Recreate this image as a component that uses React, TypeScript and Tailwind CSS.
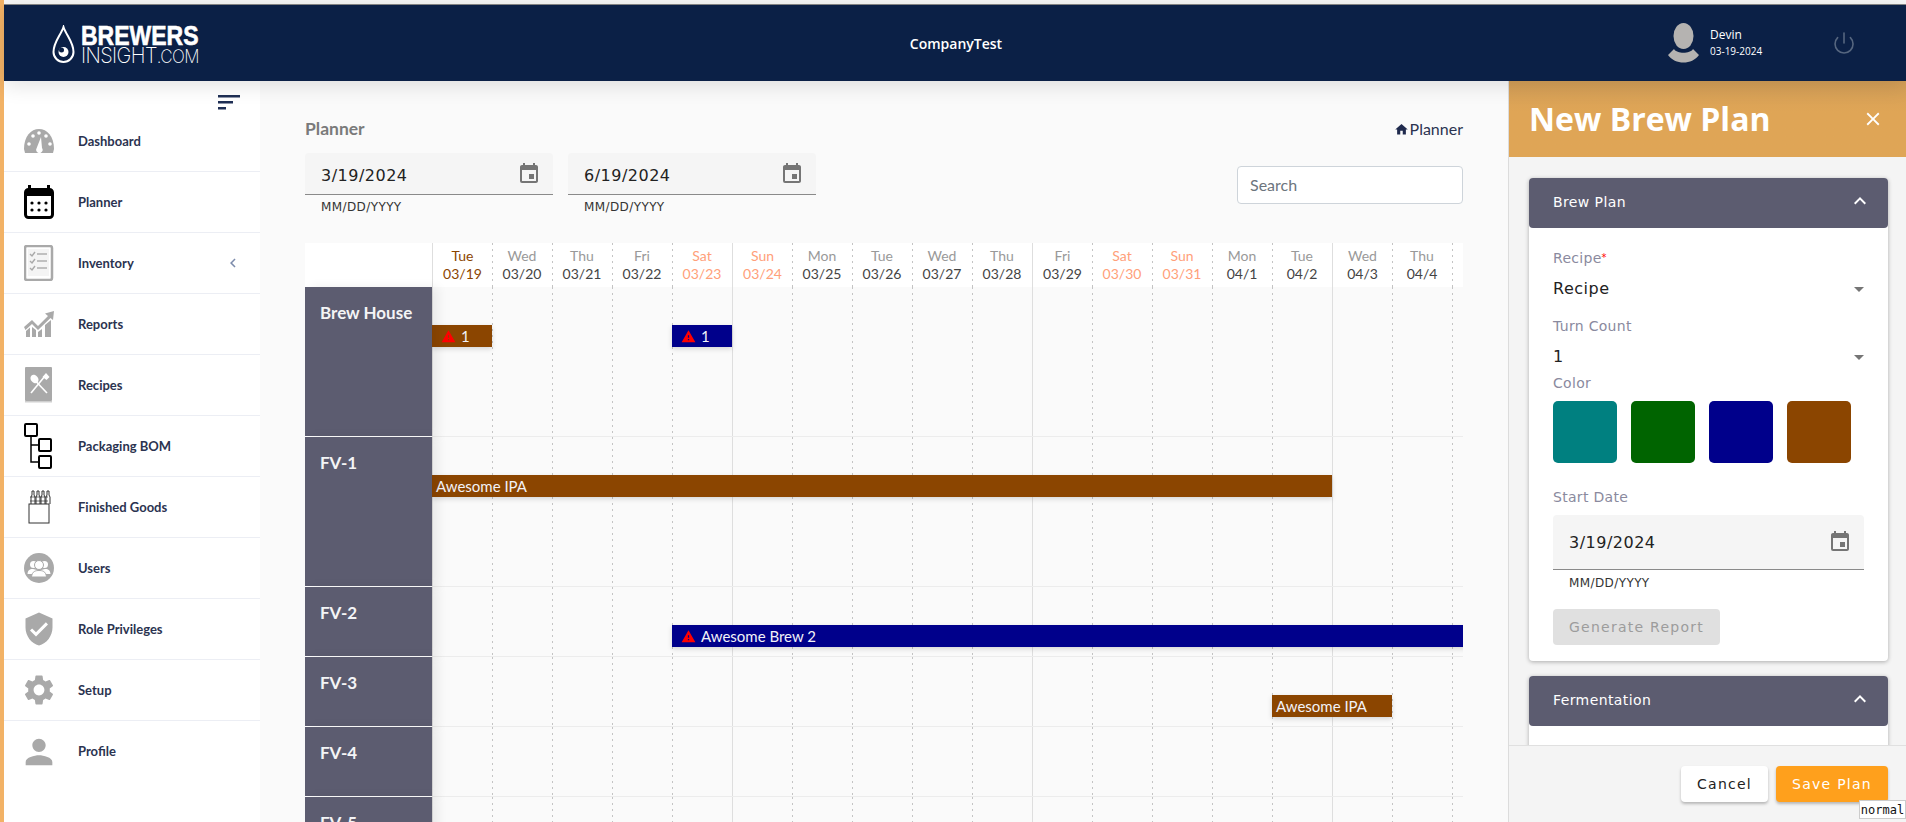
import React from 'react';
import { MdEvent, MdArrowDropDown, MdExpandLess, MdClose, MdWarning, MdHome, MdVerifiedUser, MdPerson, MdSettings, MdChevronLeft } from 'react-icons/md';
import { Power } from 'lucide-react';

const GaugeIcon = () => (
  <svg width="30" height="24" viewBox="0 0 30 24">
    <path d="M0 20 C0 7 7 0 15 0 C23 0 30 7 30 20 L29 24 H1 L0 20 Z" fill="#a9a9a9" />
    <circle cx="5" cy="15" r="1.8" fill="#fff" />
    <circle cx="9" cy="7" r="1.8" fill="#fff" />
    <circle cx="15" cy="4" r="1.8" fill="#fff" />
    <circle cx="22" cy="7" r="1.8" fill="#fff" />
    <circle cx="26" cy="15" r="1.8" fill="#fff" />
    <path d="M17 8 L18 19 A3.2 3.2 0 1 1 12.5 19.5 Z" fill="#fff" />
  </svg>
);

const CalendarIcon = () => (
  <svg width="30" height="34" viewBox="0 0 30 34">
    <rect x="1.5" y="4.5" width="27" height="28" rx="3" fill="#fff" stroke="#000" strokeWidth="3" />
    <rect x="1" y="6" width="28" height="5" fill="#000" />
    <rect x="4" y="0" width="3" height="6" fill="#000" />
    <rect x="23" y="0" width="3" height="6" fill="#000" />
    {[8, 15, 22].map((x) => (
      <g key={x}>
        <circle cx={x} cy="18" r="1.6" fill="#000" />
        <circle cx={x} cy="25" r="1.6" fill="#000" />
      </g>
    ))}
  </svg>
);

const ChecklistIcon = () => (
  <svg width="30" height="36" viewBox="0 0 30 36" fill="none">
    <rect x="1" y="1" width="27" height="34" rx="2" fill="#fff" stroke="#a9a9a9" strokeWidth="2.5" />
    <rect x="4" y="4" width="21" height="27" fill="#f4f4f4" />
    {[9, 16, 23].map((y) => (
      <g key={y} stroke="#a9a9a9" strokeWidth="1.4">
        <path d={`M6 ${y} l2 2 l3 -4`} />
        <path d={`M13 ${y} h10`} />
      </g>
    ))}
  </svg>
);

const ReportsIcon = () => (
  <svg width="30" height="26" viewBox="0 0 30 26" fill="#a9a9a9">
    <path d="M0 16 L8 9 L14 15 L24 5 L21 2.5 L30 0 L29 9 L26.5 7 L14 19 L8 13 L1.5 19 Z" />
    <path d="M2 20 L6 16.5 V26 H2 Z M8 16 L12 19 V26 H8 Z M14 21 L18 18 V26 H14 Z M21 14 L27 9 V26 H21 Z" />
  </svg>
);

const RecipesIcon = () => (
  <svg width="28" height="36" viewBox="0 0 28 36">
    <rect width="27" height="34" rx="1" fill="#a9a9a9" />
    <rect y="34" width="27" height="1.5" fill="#cfcfcf" />
    <ellipse cx="9.5" cy="12" rx="3.6" ry="4.6" transform="rotate(-40 9.5 12)" fill="#fff" />
    <path d="M11.5 15 L22 26" stroke="#fff" strokeWidth="1.6" />
    <path d="M20 9 L6 26" stroke="#fff" strokeWidth="1.6" />
    <path d="M17.5 10 L21 6 L24.5 10 L21.5 13 Z" fill="#fff" />
  </svg>
);

const BomIcon = () => (
  <svg width="30" height="46" viewBox="0 0 30 46" fill="none" stroke="#000" strokeWidth="1.5">
    <rect x="1" y="1" width="12" height="12" rx="1" strokeWidth="2" />
    <rect x="15" y="16" width="12" height="12" rx="1" strokeWidth="2" />
    <rect x="15" y="33" width="12" height="12" rx="1" strokeWidth="2" />
    <path d="M7 13 V39 H15 M7 22 H15" />
  </svg>
);

const GoodsIcon = () => (
  <svg width="24" height="36" viewBox="0 0 24 36" fill="none" stroke="#333" strokeWidth="1">
    <rect x="2" y="15" width="20" height="19" fill="#fff" />
    {[4, 9, 14, 19].map((x) => (
      <path key={x} d={`M${x} 15 V8 l1 -2 V2 h2 V6 l1 2 V15`} />
    ))}
    <path d="M3 8 H21 M3 12 H21" strokeWidth="0.7" />
  </svg>
);

const UsersIcon = () => (
  <svg width="30" height="30" viewBox="0 0 30 30">
    <circle cx="15" cy="15" r="15" fill="#a9a9a9" />
    <circle cx="9.5" cy="11.5" r="3.5" fill="#fff" />
    <circle cx="20.5" cy="11.5" r="3.5" fill="#fff" />
    <path d="M3.5 21 C4 16 7 16 9 16 L13 17 V21 Z M26.5 21 C26 16 23 16 21 16 L17 17 V21 Z" fill="#fff" />
    <circle cx="15" cy="12" r="4.5" fill="#fff" stroke="#a9a9a9" />
    <path d="M7.5 24 C8 18 12 17.5 15 17.5 C18 17.5 22 18 22.5 24 Z" fill="#fff" stroke="#a9a9a9" />
  </svg>
);

const AvatarIcon = () => (
  <svg width="31" height="40" viewBox="0 0 31 40">
    <ellipse cx="15.5" cy="13" rx="10" ry="13" fill="#b5b3b1" />
    <path d="M6 26 C9 31 22 31 25 26 L31 32 C24 42 7 42 0 32 Z" fill="#b5b3b1" />
  </svg>
);

const Logo = () => (
  <div className="flex items-center gap-[6px] text-white w-[148px] shrink-0">
    <svg width="23" height="39" viewBox="0 0 23 39" fill="none" stroke="#fff" strokeWidth="2" className="shrink-0 mt-[2px]">
      <path d="M11.5 2 C9 10 1.5 17 1.5 27 A10 10 0 0 0 21.5 27 C21.5 17 14 10 11.5 2 Z" />
      <circle cx="11.5" cy="27" r="5" fill="#fff" stroke="none" />
      <circle cx="9.5" cy="25" r="2.5" fill="#0b2046" stroke="none" />
    </svg>
    <div className="flex flex-col gap-[3px] whitespace-nowrap">
      <span className="text-[23px] leading-[20px] font-bold font-['Liberation_Sans',sans-serif] scale-y-[1.2] origin-top [-webkit-text-stroke:0.5px_white]">BREWERS</span>
      <span className="text-[20px] leading-[17px] font-extralight font-['Inter',sans-serif] tracking-[-0.6px] scale-y-[1.1] origin-top">
        INSIGHT<span className="text-[17px]">.COM</span>
      </span>
    </div>
  </div>
);

const menu = [
  { label: 'Dashboard', icon: <GaugeIcon /> },
  { label: 'Planner', icon: <CalendarIcon /> },
  { label: 'Inventory', icon: <ChecklistIcon />, caret: true },
  { label: 'Reports', icon: <ReportsIcon /> },
  { label: 'Recipes', icon: <RecipesIcon /> },
  { label: 'Packaging BOM', icon: <BomIcon /> },
  { label: 'Finished Goods', icon: <GoodsIcon /> },
  { label: 'Users', icon: <UsersIcon /> },
  { label: 'Role Privileges', icon: <MdVerifiedUser size={36} color="#a9a9a9" className="-mx-[3px]" /> },
  { label: 'Setup', icon: <MdSettings size={36} color="#a9a9a9" className="-mx-[3px]" /> },
  { label: 'Profile', icon: <MdPerson size={40} color="#a9a9a9" className="-mx-[5px]" /> },
];

const days = [
  ['Tue', '03/19'], ['Wed', '03/20'], ['Thu', '03/21'], ['Fri', '03/22'], ['Sat', '03/23'], ['Sun', '03/24'],
  ['Mon', '03/25'], ['Tue', '03/26'], ['Wed', '03/27'], ['Thu', '03/28'], ['Fri', '03/29'], ['Sat', '03/30'],
  ['Sun', '03/31'], ['Mon', '04/1'], ['Tue', '04/2'], ['Wed', '04/3'], ['Thu', '04/4'], ['Fri', '04/5'],
];

const rows = [
  { name: 'Brew House', tall: true, bars: [
    { start: 0, span: 1, color: 'bg-[#8b4500]', text: '1', warn: true },
    { start: 4, span: 1, color: 'bg-[#00008b]', text: '1', warn: true },
  ] },
  { name: 'FV-1', tall: true, bars: [{ start: 0, span: 15, color: 'bg-[#8b4500]', text: 'Awesome IPA' }] },
  { name: 'FV-2', bars: [{ start: 4, span: 14, color: 'bg-[#00008b]', text: 'Awesome Brew 2', warn: true }] },
  { name: 'FV-3', bars: [{ start: 14, span: 2, color: 'bg-[#8b4500]', text: 'Awesome IPA' }] },
  { name: 'FV-4', bars: [] },
  { name: 'FV-5', bars: [] },
];

// every fifth column has a solid line, the others a sparse dotted one
const dayLine = (i: number) =>
  i % 5 === 0
    ? 'border-l border-[#dedede]'
    : 'bg-[linear-gradient(to_bottom,#c4c4c4_2px,transparent_2px)] bg-[length:1px_6px] bg-repeat-y';

const DateField = ({ value, width }: { value: string; width: string }) => (
  <div className={width}>
    <div className="h-[42px] bg-[#f5f5f5] rounded-t-[4px] border-b border-[#8a8a8a] flex items-center justify-between pl-[16px] pr-[12px] text-[16px] tracking-[0.5px] text-[#222]">
      <span className="mt-[4px]">{value}</span>
      <MdEvent size={24} color="#757575" />
    </div>
    <div className="mt-[4px] pl-[16px] text-[12px] leading-[16px] tracking-[0.4px] text-[#333]">MM/DD/YYYY</div>
  </div>
);

const AccordionHead = ({ title }: { title: string }) => (
  <div className="h-[50px] bg-[#5c5c70] rounded-[4px] flex items-center justify-between pl-[24px] pr-[16px] text-white text-[14px] tracking-[0.4px]">
    <span className="-mt-[1px]">{title}</span>
    <MdExpandLess size={24} className="-mt-[4px]" />
  </div>
);

const swatches = ['bg-[#008080]', 'bg-[#006400]', 'bg-[#00008b]', 'bg-[#8b4500]'];

export default function App() {
  return (
    <div className="h-[822px] w-full overflow-hidden flex bg-[#fafafa] font-['Lato',sans-serif]">
      <div className="w-[4px] shrink-0 bg-[#f2b266]" />
      <div className="flex-1 min-w-0 flex flex-col">
        <div className="h-[5px] shrink-0 bg-[#f7f7f7] border-b border-[#888]" />
        <header className="h-[76px] shrink-0 bg-[#0b2046] flex items-center relative z-10 shadow-[0_4px_20px_rgba(0,0,0,0.12)] pl-[48px] pr-[50px]">
          <Logo />
          <div className="flex-1 text-center text-white text-[14px] font-semibold font-['Open_Sans',sans-serif] pl-[44px]">CompanyTest</div>
          <div className="flex items-center gap-[11px] text-white font-['Open_Sans',sans-serif]">
            <AvatarIcon />
            <div className="w-[80px]">
              <div className="text-[12px] leading-[16px]">Devin</div>
              <div className="text-[10px] leading-[16px]">03-19-2024</div>
            </div>
          </div>
          <Power size={24} strokeWidth={1.6} color="#56667f" className="ml-[42px]" />
        </header>

        <div className="flex-1 min-h-0 flex">
          <aside className="w-[256px] shrink-0 bg-white">
            <div className="h-[30px] flex justify-end pr-[20px] pt-[14px]">
              <svg width="22" height="15" viewBox="0 0 22 15" fill="#1f2f55">
                <rect width="22" height="2.5" />
                <rect y="6" width="15" height="2.5" />
                <rect y="12" width="8" height="2.5" />
              </svg>
            </div>
            {menu.map((item, i) => (
              <div key={item.label} className={`h-[61px] flex items-center pl-[20px] pr-[18px] ${i < menu.length - 1 ? 'border-b border-[#eceef4]' : ''}`}>
                <div className="w-[30px] shrink-0 flex justify-center">{item.icon}</div>
                <span className="ml-[24px] mt-[1px] flex-1 text-[13px] font-bold text-[#2b3350]">{item.label}</span>
                {item.caret && <MdChevronLeft size={18} color="#7c8bab" />}
              </div>
            ))}
          </aside>

          <main className="flex-1 min-w-0 overflow-hidden px-[45px] pt-[38px]">
            <div className="flex items-center justify-between h-[20px]">
              <span className="text-[17.5px] font-bold text-[#7a7a7a]">Planner</span>
              <span className="flex items-center gap-[1px] text-[16px] text-[#2b3350]">
                <MdHome size={15} color="#1f2a4d" />
                Planner
              </span>
            </div>
            <div className="mt-[14px] h-[90px] flex justify-between font-['DejaVu_Sans',sans-serif]">
              <div className="flex gap-[15px]">
                <DateField value="3/19/2024" width="w-[248px]" />
                <DateField value="6/19/2024" width="w-[248px]" />
              </div>
              <div className="mt-[13px] w-[226px] h-[38px] bg-white border border-[#ced4da] rounded-[4px] flex items-center px-[12px] text-[16px] text-[#6c757d] font-['Lato',sans-serif]">
                Search
              </div>
            </div>

            <div>
              <div className="flex h-[44px]">
                <div className="w-[127px] shrink-0 bg-white" />
                <div className="flex-1 min-w-0 flex overflow-hidden bg-white">
                  {days.map(([d, date], i) => {
                    const weekend = d === 'Sat' || d === 'Sun';
                    const labelColor = i === 0 ? 'text-[#8b4500]' : weekend ? 'text-[#ffa07a]' : 'text-[#999]';
                    const dateColor = i === 0 ? 'text-[#8b4500]' : weekend ? 'text-[#ffa07a]' : 'text-[#444]';
                    return (
                      <div key={date} className={`w-[60px] shrink-0 text-center text-[14px] leading-[18px] pt-[4px] ${dayLine(i)}`}>
                        {i < days.length - 1 && (
                          <>
                            <div className={labelColor}>{d}</div>
                            <div className={dateColor}>{date}</div>
                          </>
                        )}
                      </div>
                    );
                  })}
                </div>
              </div>

              {rows.map((row) => (
                <div key={row.name} className={`flex ${row.tall ? 'h-[150px]' : 'h-[70px]'}`}>
                  <div className="w-[127px] shrink-0 bg-[#5c5c70] border-b border-white pl-[15px] pt-[16px] text-[17px] leading-[20px] font-bold text-[#f4f4f6] relative z-[1] shadow-[6px_0_10px_rgba(0,0,0,0.07)]">
                    {row.name}
                  </div>
                  <div className="flex-1 min-w-0 relative flex overflow-hidden border-b border-[#ececec]">
                    {days.map(([, date], i) => (
                      <div key={date} className={`w-[60px] shrink-0 ${dayLine(i)}`} />
                    ))}
                    {row.bars.map((bar) => (
                      <div
                        key={bar.start}
                        className={`absolute top-[38px] h-[22px] flex items-center text-[15px] text-[#f2f2f8] shadow-[0_2px_5px_rgba(0,0,0,0.15)] ${bar.color} ${bar.warn ? 'pl-[9px] gap-[5px]' : 'pl-[4px]'}`}
                        style={{ left: bar.start * 60, width: bar.span * 60 }}
                      >
                        {bar.warn && <MdWarning size={15} color="#ff0000" />}
                        {bar.text}
                      </div>
                    ))}
                  </div>
                </div>
              ))}
            </div>
          </main>

          <section className="w-[398px] shrink-0 relative z-[2] border-l border-[#dcdcdc] bg-[#f4f4f4] flex flex-col font-['DejaVu_Sans',sans-serif]">
            <div className="h-[76px] shrink-0 bg-gradient-to-b from-[#d49f58] to-[#dfa556] to-40% flex items-center justify-between pl-[20px] pr-[22px] text-white">
              <span className="text-[32px] font-bold font-['Open_Sans',sans-serif]">New Brew Plan</span>
              <MdClose size={22} />
            </div>
            <div className="flex-1 min-h-0 overflow-hidden pl-[20px] pr-[18px] pt-[21px]">
              <div className="rounded-[4px] bg-white shadow-[0_1px_4px_rgba(0,0,0,0.3)]">
                <AccordionHead title="Brew Plan" />
                <div className="px-[24px] pt-[20px] pb-[16px]">
                  <div className="text-[14px] leading-[20px] tracking-[0.3px] text-[#8a8a9e]">
                    Recipe<span className="text-[#ff0000] align-[2px] text-[10px]">*</span>
                  </div>
                  <div className="mt-[9px] h-[24px] flex items-center justify-between text-[16px] tracking-[0.5px] text-[#222]">
                    Recipe
                    <MdArrowDropDown size={24} color="#757575" className="-mr-[7px]" />
                  </div>
                  <div className="mt-[15px] text-[14px] leading-[20px] tracking-[0.3px] text-[#8a8a9e]">Turn Count</div>
                  <div className="mt-[9px] h-[24px] flex items-center justify-between text-[16px] text-[#222]">
                    1
                    <MdArrowDropDown size={24} color="#757575" className="-mr-[7px]" />
                  </div>
                  <div className="mt-[4px] text-[14px] leading-[20px] tracking-[0.3px] text-[#8a8a9e]">Color</div>
                  <div className="mt-[8px] flex gap-[14px]">
                    {swatches.map((c) => (
                      <div key={c} className={`w-[64px] h-[62px] rounded-[5px] ${c}`} />
                    ))}
                  </div>
                  <div className="mt-[24px] text-[14px] leading-[20px] tracking-[0.3px] text-[#8a8a9e]">Start Date</div>
                  <div className="mt-[8px] w-[311px] h-[55px] bg-[#f5f5f5] rounded-t-[4px] border-b border-[#8a8a8a] flex items-center justify-between pl-[16px] pr-[12px] text-[16px] tracking-[0.5px] text-[#222]">
                    <span className="mt-[2px]">3/19/2024</span>
                    <MdEvent size={24} color="#757575" />
                  </div>
                  <div className="mt-[5px] pl-[16px] text-[12px] leading-[16px] tracking-[0.4px] text-[#333]">MM/DD/YYYY</div>
                  <div className="mt-[18px] w-[167px] h-[36px] bg-[#e0e0e0] rounded-[4px] flex items-center justify-center text-[14px] tracking-[1.25px] text-[#9c9c9c]">
                    Generate Report
                  </div>
                </div>
              </div>
              <div className="mt-[15px] rounded-[4px] bg-white h-[80px] shadow-[0_1px_4px_rgba(0,0,0,0.3)]">
                <AccordionHead title="Fermentation" />
              </div>
            </div>
            <div className="h-[77px] shrink-0 relative z-[1] bg-[#f4f4f4] border-t border-[#e0e0e0] flex justify-end gap-[8px] pr-[18px] pt-[20px] text-[14px] tracking-[1.25px]">
              <div className="w-[87px] h-[36px] bg-white rounded-[4px] flex items-center justify-center text-[#222] shadow-[0_2px_3px_rgba(0,0,0,0.25)]">Cancel</div>
              <div className="w-[112px] h-[36px] bg-[#ffa01c] rounded-[4px] flex items-center justify-center text-white shadow-[0_2px_3px_rgba(0,0,0,0.25)]">Save Plan</div>
              <div className="absolute right-0 bottom-[3px] h-[19px] w-[47px] bg-white border border-[#ccc] flex items-center justify-center text-[12px] tracking-normal text-[#111] font-['DejaVu_Sans_Mono',monospace]">normal</div>
            </div>
          </section>
        </div>
      </div>
    </div>
  );
}
